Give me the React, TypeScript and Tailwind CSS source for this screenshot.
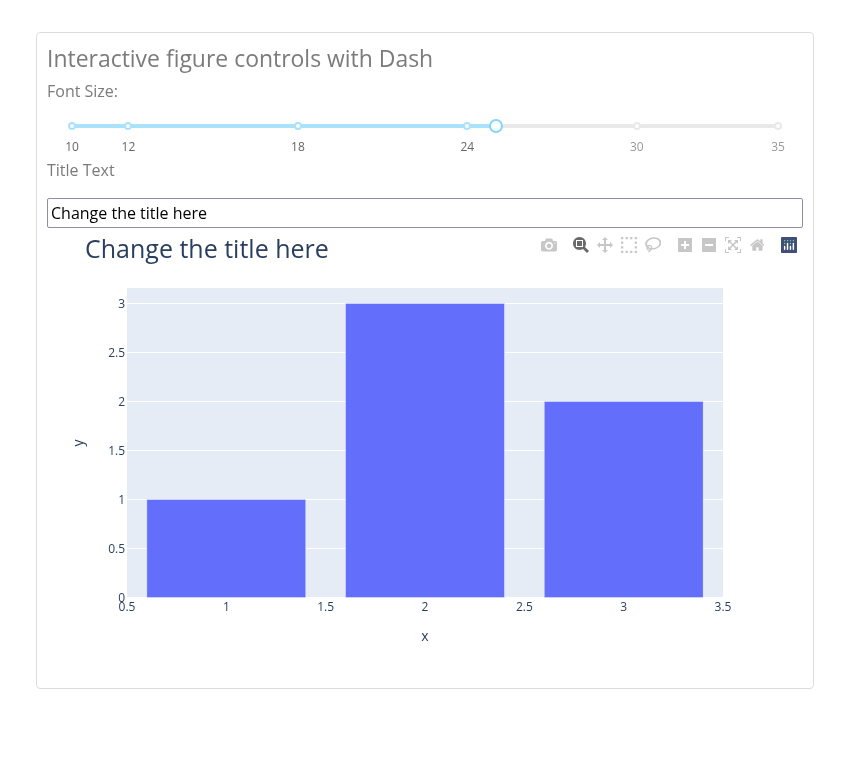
const marks = [10, 12, 18, 24, 30, 35];
const sliderValue = 25;

const xTicks = [0.5, 1, 1.5, 2, 2.5, 3, 3.5];
const yTicks = [0, 0.5, 1, 1.5, 2, 2.5, 3];
const bars = [
  { x: 1, y: 1 },
  { x: 2, y: 3 },
  { x: 3, y: 2 },
];

// plot area inside the 756x450 figure
const plot = { left: 80, right: 676, top: 60, bottom: 370 };
const scaleX = (v: number) => plot.left + ((v - 0.5) / 3) * (plot.right - plot.left);
const scaleY = (v: number) => plot.bottom - v * 98;

const sliderLeft = (v: number) => `${((v - 10) / 25) * 100}%`;

type ModeIcon = {
  name: string;
  width: number;
  d: string;
  active?: boolean;
};

const modeGroups: ModeIcon[][] = [
  [
    {
      name: "camera",
      width: 1000,
      d: "m500 450c-83 0-150-67-150-150 0-83 67-150 150-150 83 0 150 67 150 150 0 83-67 150-150 150z m400 150h-120c-16 0-34 13-39 29l-31 93c-6 15-23 28-40 28h-340c-16 0-34-13-39-28l-31-93c-6-16-23-29-40-29h-120c-55 0-100-45-100-100v-450c0-55 45-100 100-100h800c55 0 100 45 100 100v450c0 55-45 100-100 100z m-400-550c-138 0-250 112-250 250 0 138 112 250 250 250 138 0 250-112 250-250 0-138-112-250-250-250z m365 380c-19 0-35 16-35 35 0 19 16 35 35 35 19 0 35-16 35-35 0-19-16-35-35-35z",
    },
  ],
  [
    {
      name: "zoom",
      width: 1000,
      active: true,
      d: "m1000-25l-250 251c40 63 63 138 63 218 0 224-182 406-407 406-224 0-406-182-406-406s183-406 407-406c80 0 155 22 218 62l250-250 125 125z m-812 250l0 438 437 0 0-438-437 0z m62 375l313 0 0-312-313 0 0 312z",
    },
    {
      name: "pan",
      width: 1000,
      d: "m1000 350l-187 188 0-125-250 0 0 250 125 0-188 187-187-187 125 0 0-250-250 0 0 125-188-188 186-187 0 125 252 0 0-250-125 0 187-188 188 188-125 0 0 250 250 0 0-126 187 188z",
    },
    {
      name: "select",
      width: 1000,
      d: "m0 850l0-143 143 0 0 143-143 0z m286 0l0-143 143 0 0 143-143 0z m285 0l0-143 143 0 0 143-143 0z m286 0l0-143 143 0 0 143-143 0z m-857-286l0-143 143 0 0 143-143 0z m857 0l0-143 143 0 0 143-143 0z m-857-285l0-143 143 0 0 143-143 0z m857 0l0-143 143 0 0 143-143 0z m-857-286l0-143 143 0 0 143-143 0z m286 0l0-143 143 0 0 143-143 0z m285 0l0-143 143 0 0 143-143 0z m286 0l0-143 143 0 0 143-143 0z",
    },
    {
      name: "lasso",
      width: 1031,
      d: "m1018 538c-36 207-290 336-568 286-277-48-473-256-436-463 10-57 36-108 76-151-13-66 11-137 68-183 34-28 75-41 114-42l-55-70 0 0c-2-1-3-2-4-3-10-14-8-34 5-45 14-11 34-8 45 4 1 1 2 3 2 5l0 0 113 140c16 11 31 24 45 40 4 3 6 7 8 11 48-3 100 0 151 9 278 48 473 255 436 462z m-624-379c-80 14-149 48-197 96 42 42 109 47 156 9 33-26 47-66 41-105z m-187-74c-19 16-33 37-39 60 50-32 109-55 174-68-42-25-95-24-135 8z m360 75c-34-7-69-9-102-8 8 62-16 128-68 170-73 59-175 54-244-5-9 20-16 40-20 61-28 159 121 317 333 354s407-60 434-217c28-159-121-318-333-355z",
    },
  ],
  [
    {
      name: "zoom in",
      width: 875,
      d: "m1 787l0-875 875 0 0 875-875 0z m687-500l-187 0 0-187-125 0 0 187-188 0 0 125 188 0 0 187 125 0 0-187 187 0 0-125z",
    },
    {
      name: "zoom out",
      width: 875,
      d: "m0 788l0-876 875 0 0 876-875 0z m688-500l-500 0 0 125 500 0 0-125z",
    },
    {
      name: "autoscale",
      width: 1000,
      d: "m250 850l-187 0-63 0 0-62 0-188 63 0 0 188 187 0 0 62z m688 0l-188 0 0-62 188 0 0-188 62 0 0 188 0 62-62 0z m-875-938l0 188-63 0 0-188 0-62 63 0 187 0 0 62-187 0z m875 188l0-188-188 0 0-62 188 0 62 0 0 62 0 188-62 0z m-125 188l-1 0-93-94-156 156 156 156 92-93 2 0 0 250-250 0 0-2 93-92-156-156-156 156 94 92 0 2-250 0 0-250 0 0 93 93 157-156-157-156-93 94 0 0 0-250 250 0 0 0-94 93 156 157 156-157-93-93 0 0 250 0 0 250z",
    },
    {
      name: "home",
      width: 928.6,
      d: "m786 296v-267q0-15-11-26t-25-10h-214v214h-143v-214h-214q-15 0-25 10t-11 26v267q0 1 0 2t0 2l321 264 321-264q1-1 1-4z m124 39l-34-41q-5-5-12-6h-2q-7 0-12 3l-386 322-386-322q-7-4-13-4-7 2-12 7l-35 41q-4 5-3 13t6 12l401 334q18 15 42 15t43-15l136-114v109q0 8 5 13t13 5h107q8 0 13-5t5-13v-227l122-102q5-5 6-12t-4-13z",
    },
  ],
];

function PlotlyLogo() {
  return (
    <svg viewBox="0 0 132 132" className="h-4 w-4">
      <rect width="132" height="132" rx="6" ry="6" fill="#3f4f75" />
      <circle cx="78" cy="54" r="6" fill="#80cfbe" />
      <circle cx="102" cy="30" r="6" fill="#80cfbe" />
      <circle cx="78" cy="30" r="6" fill="#80cfbe" />
      <circle cx="54" cy="30" r="6" fill="#80cfbe" />
      <circle cx="30" cy="30" r="6" fill="#80cfbe" />
      <circle cx="30" cy="54" r="6" fill="#80cfbe" />
      <path
        fill="#fff"
        d="M30,72a6,6,0,0,0-6,6v24a6,6,0,0,0,12,0V78A6,6,0,0,0,30,72Z M78,72a6,6,0,0,0-6,6v24a6,6,0,0,0,12,0V78A6,6,0,0,0,78,72Z M54,48a6,6,0,0,0-6,6v48a6,6,0,0,0,12,0V54A6,6,0,0,0,54,48Z M102,48a6,6,0,0,0-6,6v48a6,6,0,0,0,12,0V54A6,6,0,0,0,102,48Z"
      />
    </svg>
  );
}

function ModeBar() {
  return (
    <div className="absolute right-[2px] top-[9px] flex gap-2">
      {modeGroups.map((group) => (
        <div key={group[0].name} className="flex">
          {group.map((icon) => (
            <div key={icon.name} className="flex h-4 w-6 justify-center">
              <svg
                viewBox={`0 0 ${icon.width} 1000`}
                className="h-4"
                fill={icon.active ? "rgba(68,68,68,0.8)" : "rgba(68,68,68,0.3)"}
              >
                <path d={icon.d} transform="matrix(1 0 0 -1 0 850)" />
              </svg>
            </div>
          ))}
        </div>
      ))}
      <div className="flex h-4 w-6 justify-center">
        <PlotlyLogo />
      </div>
    </div>
  );
}

function FontSlider() {
  return (
    <div className="px-[25px] pb-[6px] pt-[21px]">
      <div className="relative h-[28px]">
        <div className="absolute left-0 right-0 top-0 h-1 rounded-full bg-[#e9e9e9]" />
        <div
          className="absolute left-0 top-0 h-1 rounded-full bg-[#abe2fb]"
          style={{ width: sliderLeft(sliderValue) }}
        />
        {marks.map((m) => {
          const reached = m <= sliderValue;
          return (
            <div key={m} style={{ left: sliderLeft(m) }} className="absolute top-[-2px]">
              <div
                className={`-ml-1 h-2 w-2 rounded-full border-2 bg-white ${
                  reached ? "border-[#abe2fb]" : "border-[#e9e9e9]"
                }`}
              />
              <span
                className={`absolute left-0 top-[16px] -translate-x-1/2 text-xs leading-[18px] ${
                  reached ? "text-[#666]" : "text-[#999]"
                }`}
              >
                {m}
              </span>
            </div>
          );
        })}
        <div
          style={{ left: sliderLeft(sliderValue) }}
          className="absolute top-[-5px] -ml-[7px] h-3.5 w-3.5 rounded-full border-2 border-[#85d6fb] bg-white"
        />
      </div>
    </div>
  );
}

function BarFigure() {
  return (
    <div className="relative h-[450px] w-full">
      <svg width="756" height="450" className="block font-['Open_Sans',sans-serif]">
        <text x="38" y="30" fontSize="25" fill="#2a3f5f">
          Change the title here
        </text>
        <rect
          x={plot.left}
          y={plot.top}
          width={plot.right - plot.left}
          height={plot.bottom - plot.top}
          fill="#e5ecf6"
        />
        {yTicks.map((t) => (
          <line
            key={t}
            x1={plot.left}
            x2={plot.right}
            y1={scaleY(t) - 0.5}
            y2={scaleY(t) - 0.5}
            stroke="#fff"
            strokeWidth={1}
          />
        ))}
        {bars.map((b) => (
          <rect
            key={b.x}
            x={scaleX(b.x - 0.4)}
            y={scaleY(b.y) - 0.5}
            width={scaleX(b.x + 0.4) - scaleX(b.x - 0.4)}
            height={scaleY(0) - scaleY(b.y)}
            fill="#636efa"
            stroke="#e5ecf6"
            strokeWidth={0.5}
          />
        ))}
        {yTicks.map((t) => (
          <text key={t} x={plot.left - 2} y={scaleY(t) + 4} textAnchor="end" fontSize="12" fill="#2a3f5f">
            {t}
          </text>
        ))}
        {xTicks.map((t) => (
          <text key={t} x={scaleX(t)} y={383} textAnchor="middle" fontSize="12" fill="#2a3f5f">
            {t}
          </text>
        ))}
        <text x={378} y={413} textAnchor="middle" fontSize="14" fill="#2a3f5f">
          x
        </text>
        <text
          x={36}
          y={215}
          textAnchor="middle"
          fontSize="14"
          fill="#2a3f5f"
          transform="rotate(-90 36 215)"
        >
          y
        </text>
      </svg>
      <ModeBar />
    </div>
  );
}

export default function App() {
  return (
    <div className="min-h-[765px] px-9 pt-8 font-['Open_Sans',sans-serif] text-[#7b7b7b] will-change-transform">
      <div className="w-[778px] rounded border border-[#dddddd] p-2.5">
        <h3 className="text-[22.94px] leading-[30px]">Interactive figure controls with Dash</h3>
        <div className="mt-[6px] text-base leading-6">Font Size:</div>
        <FontSlider />
        <div className="text-base leading-6">Title Text</div>
        <input
          defaultValue="Change the title here"
          className="mt-[16px] block h-[30px] w-full rounded-xs border border-[#8f8da5] px-[3px] text-base text-black outline-none"
        />
        <BarFigure />
      </div>
    </div>
  );
}
